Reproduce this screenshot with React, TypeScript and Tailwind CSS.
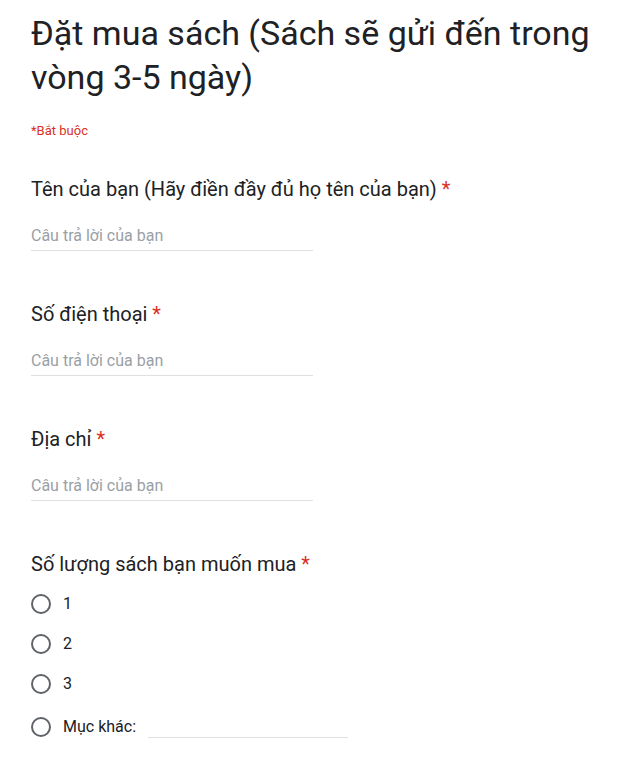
import React from 'react';

const font = { fontFamily: 'Roboto, "Noto Sans", sans-serif' };

// câu hỏi dạng trả lời ngắn
const TextQuestion: React.FC<{ label: string }> = ({ label }) => (
  <div className="h-[125px]">
    <div className="text-[20px] leading-[24px] text-[#202124]">
      {label} <span className="text-[#d93025]">*</span>
    </div>
    <div className="mt-[25px] w-[282px] border-b border-[#e0e0e0] pb-[4px]">
      <input
        type="text"
        placeholder="Câu trả lời của bạn"
        className="block w-full bg-transparent text-[16px] leading-[20px] text-[#202124] outline-none placeholder:text-[#9aa0a6]"
      />
    </div>
  </div>
);

const Radio: React.FC<{ label: string; other?: boolean }> = ({ label, other }) => (
  <label className="flex h-[40px] items-center">
    <span className="h-[20px] w-[20px] shrink-0 rounded-full border-2 border-[#5f6368]" />
    <span className="ml-[12px] text-[16px] leading-[20px] text-[#202124]">{label}</span>
    {other && <span className="ml-[12px] h-[22px] w-[200px] border-b border-[#e0e0e0]" />}
  </label>
);

export default function App() {
  return (
    <div className="min-h-screen bg-white px-[31px] pt-[11px]" style={font}>
      <h1 className="text-[34px] leading-[44px] text-[#202124]">
        Đặt mua sách (Sách sẽ gửi đến trong vòng 3-5 ngày)
      </h1>
      <div className="mt-[24px] text-[13px] leading-[16px] text-[#d93025]">*Bắt buộc</div>

      <div className="mt-[38px]">
        <TextQuestion label="Tên của bạn (Hãy điền đầy đủ họ tên của bạn)" />
        <TextQuestion label="Số điện thoại" />
        <TextQuestion label="Địa chỉ" />

        <div className="text-[20px] leading-[24px] text-[#202124]">
          Số lượng sách bạn muốn mua <span className="text-[#d93025]">*</span>
        </div>
        <div className="mt-[8px]">
          <Radio label="1" />
          <Radio label="2" />
          <Radio label="3" />
          <div className="mt-[3px]">
            <Radio label="Mục khác:" other />
          </div>
        </div>
      </div>
    </div>
  );
}
